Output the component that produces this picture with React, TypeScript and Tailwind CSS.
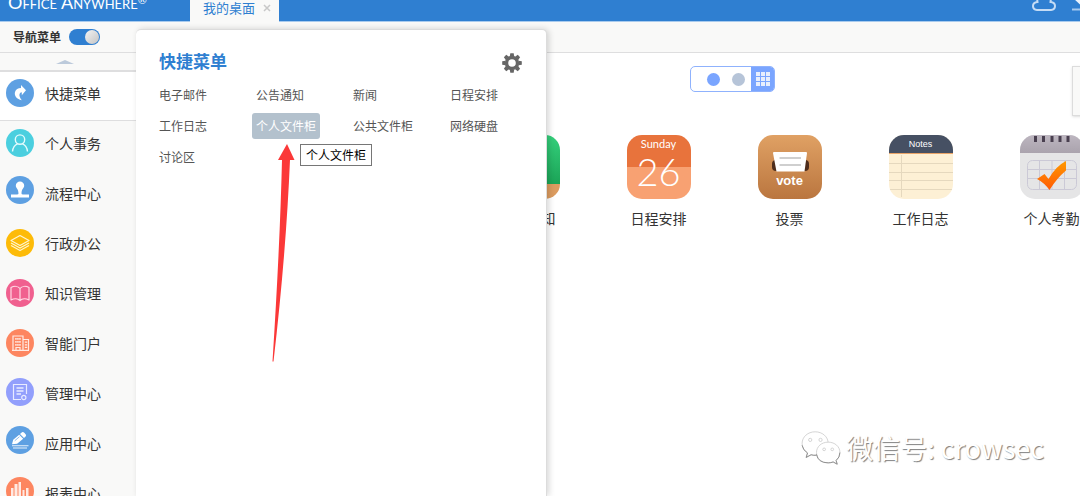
import type { ReactNode } from "react";

type MenuItem = { label: string; color: string; cy: number; glyph: ReactNode };

const menuItems: MenuItem[] = [
  {
    label: "快捷菜单",
    color: "#5ea0e2",
    cy: 18,
    glyph: (
      <path
        d="M1-8 6-2.800 1.800 2.200V-.8C-1.200-.4-1.500 3.200 1.800 7.200-3.200 6.300-6 2.800-5-1C-4.200-3.700-2-5 1-5Z"
        fill="#fff"
      />
    ),
  },
  {
    label: "个人事务",
    color: "#4bcfdf",
    cy: 18,
    glyph: (
      <g fill="none" stroke="#e4fbfd" strokeWidth="1.4">
        <circle cx="0" cy="-3.400" r="4.700" />
        <path d="M-7.500 8.500C-7 4-5 1.700-2.500.8M7.500 8.500C7 4 5 1.700 2.500.8" />
      </g>
    ),
  },
  {
    label: "流程中心",
    color: "#5ea0e2",
    cy: 15,
    glyph: (
      <path
        d="M0-8.500a4.200 4.200 0 0 1 4.200 4.200C4.200-1.800 1.500-1.500 1.500 3.500Q1.500 4.500 3 4.500H9V7.500H-9V4.500H-3Q-1.500 4.500-1.500 3.500C-1.500-1.500-4.200-1.800-4.200-4.300A4.200 4.200 0 0 1 0-8.500Z"
        fill="#fff"
      />
    ),
  },
  {
    label: "行政办公",
    color: "#fdbb08",
    cy: 18,
    glyph: (
      <g fill="none" stroke="#fff5cf" strokeWidth="1.200" strokeLinejoin="round">
        <path d="M0-7.500 9-2.500 0 2.500-9-2.500Z" />
        <path d="M-9 0 0 5 9 0M-9 2.600 0 7.600 9 2.600" />
      </g>
    ),
  },
  {
    label: "知识管理",
    color: "#f0608f",
    cy: 18,
    glyph: (
      <path
        d="M0-4.500C-2-7-6-7-9-5.500V7C-6 5.500-2 5.500 0 7.500 2 5.500 6 5.500 9 7V-5.500C6-7 2-7 0-4.500ZV7.500"
        fill="none"
        stroke="#ffd9e5"
        strokeWidth="1.200"
        strokeLinejoin="round"
      />
    ),
  },
  {
    label: "智能门户",
    color: "#fd8660",
    cy: 18,
    glyph: (
      <g fill="none" stroke="#ffeae3" strokeWidth="1.200">
        <path d="M-7 7V-7H3V7M3-3.500H8.500V7M-8 7.300H9" />
        <path d="M-4.800-4.200H.8M-4.800-1.200H.8M-4.800 1.800H.8" strokeWidth="1.700" strokeDasharray="1.500 .5" />
        <path d="M-4 7V4.500H0V7M4.800-.8H7.200M4.800 1.800H7.200M4.800 4.400H7.200" />
      </g>
    ),
  },
  {
    label: "管理中心",
    color: "#929ffc",
    cy: 17,
    glyph: (
      <g fill="none" stroke="#e8ebff" strokeWidth="1.200">
        <path d="M1 7.500H-6.500V-7.500H6.500V2" />
        <path d="M-3.500-4H3.500M-3.500-1H3.500M-3.500 2H1" strokeWidth="1.500" />
        <circle cx="3.800" cy="5.500" r="2.100" />
      </g>
    ),
  },
  {
    label: "应用中心",
    color: "#5ea0e2",
    cy: 15,
    glyph: (
      <g fill="#fff">
        <path d="M-8 4.300-6.800-.2-.8-5.200 3.200-1.200-2.900 3.800ZM0-6 2-7.800Q3.200-8.500 4.300-7.300L5.800-5.600Q6.500-4.500 5.600-3.500L4-2Z" />
        <path d="M-8 5.200H8.500V6.300H-8ZM-7 7.400H7V8.500H-7Z" opacity=".85" />
        <path d="M-5.300.8-.5-3.300" stroke="#5ea0e2" strokeWidth=".7" />
      </g>
    ),
  },
  {
    label: "报表中心",
    color: "#fd8660",
    cy: 16,
    glyph: (
      <path
        d="M-9-3H-6.500V7H-9ZM-5.500-7H-2.500V7H-5.500ZM-1.500-9H1V7H-1.500ZM2.500-1H4.500V7H2.500ZM6-3H8.500V7H6Z"
        fill="#ffeae3"
      />
    ),
  },
];

const shortcuts = [
  "电子邮件",
  "公告通知",
  "新闻",
  "日程安排",
  "工作日志",
  "个人文件柜",
  "公共文件柜",
  "网络硬盘",
  "讨论区",
];

function NavIcon({ color, cy, glyph }: { color: string; cy: number; glyph: ReactNode }) {
  return (
    <svg className="h-9 w-7 shrink-0" viewBox="0 0 28 36" aria-hidden="true">
      <circle cx="14" cy={cy} r="14" fill={color} />
      <g transform={`translate(14 ${cy})`}>{glyph}</g>
    </svg>
  );
}

function NoticeIcon() {
  return (
    <svg className="size-16" viewBox="0 0 64 64" aria-hidden="true">
      <defs>
        <linearGradient id="notice" x2="0" y2="1">
          <stop offset="0" stopColor="#35d07c" />
          <stop offset="1" stopColor="#1ba457" />
        </linearGradient>
        <clipPath id="noticeClip">
          <rect width="64" height="64" rx="15" />
        </clipPath>
      </defs>
      <g clipPath="url(#noticeClip)">
        <rect width="64" height="49" fill="url(#notice)" />
        <rect y="49" width="64" height="15" fill="#dc9c60" />
      </g>
    </svg>
  );
}

function CalendarIcon() {
  return (
    <div className="flex size-16 flex-col items-center overflow-hidden rounded-[15px] bg-linear-to-b from-[#e8733c] from-50% to-[#f8a172] to-50% pt-[3px] text-white">
      <span className="text-[11px] leading-3 font-[Lato,'Open_Sans',sans-serif]">Sunday</span>
      <span className="text-[38px] leading-[42px] font-light font-[Lato,sans-serif]">26</span>
    </div>
  );
}

function VoteIcon() {
  return (
    <div className="flex size-16 flex-col items-center rounded-[15px] bg-linear-to-b from-[#e0a164] to-[#ba763f] pt-4 text-white">
      <svg className="h-[22px] w-10" viewBox="0 0 40 22" aria-hidden="true">
        <rect x="2" y="9" width="37" height="11" rx="4" fill="#4e2d1c" />
        <path d="M3 2Q3 1 4 1H36Q37 1 37 2L34.500 20.500H6.500Z" fill="#fff" />
        <path d="M9.500 7H31M9.500 14H31" stroke="#cfcfcf" strokeWidth="2" />
      </svg>
      <span className="text-[13px] leading-4 font-bold font-['Liberation_Sans',sans-serif]">vote</span>
    </div>
  );
}

function NotesIcon() {
  return (
    <div className="flex size-16 flex-col overflow-hidden rounded-[15px] bg-[#fdf0d5]">
      <div className="flex h-[19px] items-center justify-center border-b border-[#e9a468] bg-[#465063] text-[9px] font-medium text-white font-['Liberation_Sans',sans-serif]">
        Notes
      </div>
      <svg className="h-[45px] w-16" viewBox="0 0 64 45" aria-hidden="true">
        <path d="M0 9.500H64M0 18.500H64M0 26.500H64M0 35.500H64M12.500 1V43" stroke="#e5d8be" fill="none" />
      </svg>
    </div>
  );
}

function AttendanceIcon() {
  return (
    <svg className="size-16" viewBox="0 0 64 64" aria-hidden="true">
      <defs>
        <clipPath id="attClip">
          <rect width="64" height="64" rx="15" />
        </clipPath>
        <linearGradient id="attTop" x2="0" y2="1">
          <stop offset="0" stopColor="#bdb6c0" />
          <stop offset="1" stopColor="#aaa3ad" />
        </linearGradient>
        <linearGradient id="attCheck" x2="0" y2="1">
          <stop offset="0" stopColor="#ff9900" />
          <stop offset="1" stopColor="#ff5a05" />
        </linearGradient>
      </defs>
      <g clipPath="url(#attClip)">
        <rect width="64" height="64" fill="#e5e5e6" />
        <rect width="64" height="18" fill="url(#attTop)" />
        <path d="M15.500 1V7M23.500 1V7M32 1V7M40 1V7M48 1V7" stroke="#493f4f" strokeWidth="3" />
        <rect x="7.500" y="25.500" width="49" height="29" rx="5" fill="none" stroke="#cbc9d6" />
        <path d="M19.500 25V54M32 25V54M44.500 25V54M7 34.500H57M7 43.500H57" stroke="#cbc9d6" fill="none" />
        <path d="M17 44 24.500 39 28.500 44Q36 31 46 26V35.500Q37 43 29.500 55Q24 47.500 17 44Z" fill="url(#attCheck)" />
      </g>
    </svg>
  );
}

const apps = [
  { label: "公告通知", icon: <NoticeIcon /> },
  { label: "日程安排", icon: <CalendarIcon /> },
  { label: "投票", icon: <VoteIcon /> },
  { label: "工作日志", icon: <NotesIcon /> },
  { label: "个人考勤", icon: <AttendanceIcon /> },
];

function Header() {
  return (
    <header className="-mt-8 flex h-[54px] shrink-0 items-end border-b border-[#a9cbee] bg-[#2f7fd1]">
      <div className="flex w-[190px] shrink-0 self-start pt-6 pl-2 text-lg leading-5 whitespace-nowrap text-white [font-variant:small-caps] font-[Lato,sans-serif]">
        Office Anywhere
        <span className="text-[11px] leading-4">®</span>
      </div>
      <div className="-mb-px flex h-7 w-[89px] items-center gap-2 bg-[#f9f9f8] pl-[13px]">
        <a href="#desktop" className="text-[13px] leading-5 text-[#2f7fd1]">
          我的桌面
        </a>
        <button type="button" aria-label="关闭" className="text-[#c8c8c8]">
          <svg className="size-2" viewBox="0 0 8 8" aria-hidden="true">
            <path d="M1 1 7 7M7 1 1 7" stroke="currentColor" strokeWidth="1.500" />
          </svg>
        </button>
      </div>
      <div className="-mr-4 ml-auto flex gap-4 pb-2.5">
        <button type="button" aria-label="云盘">
          <svg className="h-5 w-6" viewBox="0 0 24 20" fill="none" stroke="#c5dcf5" strokeWidth="2" aria-hidden="true">
            <path d="M5 19Q1 18.500 1 15 1 11.500 5.500 11 4 3 12 3T18.500 11Q23 11.500 23 15 23 18.500 19 19Z" />
          </svg>
        </button>
        <button type="button" aria-label="下载">
          <svg className="h-5 w-6" viewBox="0 0 24 20" aria-hidden="true">
            <path d="M9 0H15V8H22L12 17 2 8H9Z" fill="#eaf3fd" />
            <path d="M0 18.500H24" stroke="#a5c9ee" strokeWidth="2" />
          </svg>
        </button>
      </div>
    </header>
  );
}

function Sidebar() {
  return (
    <nav className="w-34 shrink-0 bg-[#f9f9f8]" aria-label="导航菜单">
      <button
        type="button"
        aria-label="向上滚动"
        className="flex h-[19px] w-full items-center justify-center border-b-2 border-[#dededf] pr-1.5"
      >
        <svg className="h-1 w-[18px]" viewBox="0 0 18 4" aria-hidden="true">
          <path d="M0 4 9 0 18 4Z" fill="#bccadb" />
        </svg>
      </button>
      <ul>
        {menuItems.map((item, i) => (
          <li key={item.label} className={i === 0 ? "h-[49px] border-b border-[#dededf] bg-white" : "h-[50px]"}>
            <a href="#menu" className="flex h-full items-center gap-[11px] pb-1.5 pl-1.5 text-sm text-[#333]">
              <NavIcon color={item.color} cy={item.cy} glyph={item.glyph} />
              {item.label}
            </a>
          </li>
        ))}
      </ul>
    </nav>
  );
}

function Desktop() {
  return (
    <main id="desktop" className="relative min-w-0 flex-1 overflow-hidden bg-white pt-[13px]">
      <div className="ml-[554px] flex h-[26px] w-[85px] items-stretch overflow-hidden rounded-[5px] border border-[#8fb2fd]">
        <div className="flex flex-1 items-center justify-end gap-3 pr-1.5">
          <button type="button" aria-label="第一屏" className="size-[13px] rounded-full bg-[#7aa5ff]" />
          <button type="button" aria-label="第二屏" className="size-[13px] rounded-full bg-[#b6c4d8]" />
        </div>
        <button type="button" aria-label="全部应用" className="flex w-[23px] items-center justify-center bg-[#7aa5ff]">
          <svg className="size-3.5" viewBox="0 0 14 14" fill="#e8effd" aria-hidden="true">
            <path d="M0 0h4v4H0zM5 0h4v4H5zM10 0h4v4h-4zM0 5h4v4H0zM5 5h4v4H5zM10 5h4v4h-4zM0 10h4v4H0zM5 10h4v4H5zM10 10h4v4h-4z" />
          </svg>
        </button>
      </div>
      <ul className="mt-[43px] flex pl-[326px]">
        {apps.map((app) => (
          <li key={app.label} className="w-[131px] shrink-0">
            <a href="#app" className="flex flex-col items-center gap-[9px] text-sm text-[#333]">
              {app.icon}
              {app.label}
            </a>
          </li>
        ))}
      </ul>
      <div className="absolute top-[13px] -right-1 h-[50px] w-3 border border-[#dcdcdc] bg-[#f9f9f8] shadow-sm" />
    </main>
  );
}

function ShortcutPanel() {
  return (
    <section className="absolute top-[29px] bottom-0 left-34 w-[411px] rounded-t-[5px] border-t border-r border-[#dcdcdc] bg-white shadow-[2px_0_6px_rgba(0,0,0,0.16)]">
      <div className="flex items-center justify-between pt-[19px] pr-6 pl-[23px]">
        <h2 className="text-[17px] leading-6 font-bold text-[#2f7fd1]">快捷菜单</h2>
        <button type="button" aria-label="设置" className="pt-1">
          <svg className="size-5" viewBox="-10 -10 20 20" fill="#666" aria-hidden="true">
            <path
              fillRule="evenodd"
              d="M0-7.200A7.200 7.200 0 1 0 0 7.200 7.200 7.200 0 1 0 0-7.200ZM0-3.800A3.800 3.800 0 1 1 0 3.800 3.800 3.800 0 1 1 0-3.800Z"
            />
            {[0, 45, 90, 135, 180, 225, 270, 315].map((a) => (
              <path key={a} transform={`rotate(${a})`} d="M-2.200-6.500-1.700-9.800H1.700L2.200-6.500Z" />
            ))}
          </svg>
        </button>
      </div>
      <ul className="mt-[9px] grid grid-cols-[repeat(4,97px)] gap-y-[5px] pl-[19px]">
        {shortcuts.map((name) => (
          <li key={name} className="flex">
            <a
              href="#shortcut"
              title={name}
              className={
                name === "个人文件柜"
                  ? "flex h-[26px] items-center rounded-[3px] bg-[#b3c1cd] px-1 text-xs text-white"
                  : "flex h-[26px] items-center px-1 text-xs text-[#555]"
              }
            >
              {name}
            </a>
          </li>
        ))}
      </ul>
      <div
        role="tooltip"
        className="absolute top-[114px] left-[164px] border border-[#767676] bg-white px-[5px] text-xs leading-5 whitespace-nowrap text-black"
      >
        个人文件柜
      </div>
      <svg className="absolute top-[114px] left-[136px] h-[218px] w-[23px]" viewBox="0 0 23 218" aria-hidden="true">
        <path d="M15 0 22.500 16H18Q14 110 1.500 217.500H.5Q8 100 10 16H6Z" fill="#fb3838" />
      </svg>
    </section>
  );
}

function Watermark() {
  return (
    <div className="absolute right-9 bottom-7 flex items-center gap-1 text-[27px] leading-10 whitespace-nowrap text-white [text-shadow:1px_1px_1px_#808080]">
      <svg className="h-9 w-[42px]" viewBox="0 0 44 40" aria-hidden="true">
        <g fill="#fff" stroke="#c4c4c4" strokeWidth=".8">
          <path d="M15.500 2C7.500 2 1 7.500 1 15 1 19.500 3.300 23 7 25.500L5.500 30.500 11 27.500Q13 28.200 17 28C24 27 30 22 30 15 30 7.500 23.500 2 15.500 2Z" />
          <circle cx="10" cy="11" r="1.800" />
          <circle cx="21.500" cy="11" r="1.800" />
          <path d="M30 13.500C22.500 13.500 17 18.500 17 25S22.500 36.500 30 36.500Q33 36.500 35.500 35.500L40 38 38.800 33.800C41.500 31.500 43 28.500 43 25 43 18.500 37.500 13.500 30 13.500Z" />
          <circle cx="25.500" cy="21.500" r="1.500" />
          <circle cx="34.500" cy="21.500" r="1.500" />
        </g>
        <path
          d="M1 17Q2 22.500 7 25.500L5.500 30.500 11 27.500Q14 28.500 17 28M17 27Q18.500 36.500 30 36.500 33 36.500 35.500 35.500L40 38 38.800 33.800Q43 30.500 43 25"
          fill="none"
          stroke="#888"
        />
      </svg>
      微信号: crowsec
    </div>
  );
}

export default function App() {
  return (
    <div className="relative flex h-screen flex-col overflow-hidden bg-white font-['Noto_Sans_CJK_SC',sans-serif]">
      <Header />
      <div className="flex h-[31px] shrink-0 items-center gap-2 border-b border-[#dededf] bg-[#f9f9f8] pl-[13px]">
        <label htmlFor="nav-toggle" className="text-xs font-bold text-[#333]">
          导航菜单
        </label>
        <input
          id="nav-toggle"
          type="checkbox"
          role="switch"
          defaultChecked
          className="flex h-4 w-[31px] appearance-none items-center justify-start rounded-full bg-[#2f7fd1] px-px before:size-3.5 before:rounded-full before:bg-linear-to-br before:from-[#f4f4f4] before:to-[#c4c4c4] checked:justify-end"
        />
      </div>
      <div className="flex min-h-0 flex-1">
        <Sidebar />
        <Desktop />
      </div>
      <ShortcutPanel />
      <Watermark />
    </div>
  );
}
